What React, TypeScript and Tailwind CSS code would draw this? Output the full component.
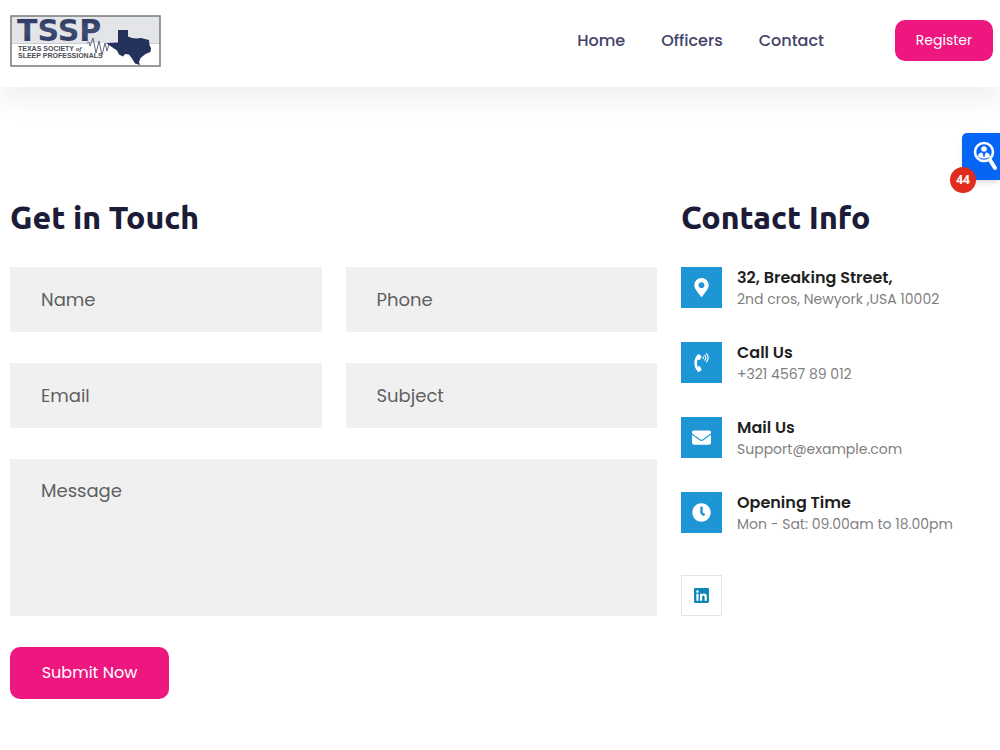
import type { ReactNode } from "react";
import { FaClock, FaEnvelope, FaLinkedin, FaMapMarkerAlt, FaPhoneVolume } from "react-icons/fa";

const NAV_LINKS = [
  { label: "Home", href: "#home" },
  { label: "Officers", href: "#officers" },
  { label: "Contact", href: "#contact" },
];

const CONTACT_ITEMS = [
  {
    title: "32, Breaking Street,",
    detail: "2nd cros, Newyork ,USA 10002",
    icon: <FaMapMarkerAlt className="h-[19px] w-[19px]" />,
  },
  { title: "Call Us", detail: "+321 4567 89 012", icon: <FaPhoneVolume className="h-[19px] w-[19px]" /> },
  { title: "Mail Us", detail: "Support@example.com", icon: <FaEnvelope className="h-[19px] w-[19px]" /> },
  { title: "Opening Time", detail: "Mon - Sat: 09.00am to 18.00pm", icon: <FaClock className="h-[19px] w-[19px]" /> },
];

function Logo() {
  return (
    <svg
      viewBox="0 0 151 52"
      className="h-[52px] w-[151px] overflow-visible"
      role="img"
      aria-label="Texas Society of Sleep Professionals"
    >
      <defs>
        <linearGradient id="logo-ink" x1="0" y1="0" x2="0" y2="1">
          <stop offset="0" stopColor="#26335c" />
          <stop offset="0.5" stopColor="#3f4c74" />
          <stop offset="1" stopColor="#26335c" />
        </linearGradient>
      </defs>
      <rect x="1" y="1" width="149" height="50" fill="#fff" />
      <rect x="1" y="1" width="149" height="27" fill="#e3e5e8" />
      <path d="M1 28.500H78M106 28.500H150" stroke="#bfc1c6" strokeWidth="0.8" />
      <rect x="1" y="1" width="149" height="50" fill="none" stroke="#77797e" strokeWidth="1.500" />
      <text x="7" y="26" fontFamily="DejaVu Sans, sans-serif" fontWeight="700" fontSize="30" fill="url(#logo-ink)">
        TSSP
      </text>
      <g fontFamily="Liberation Sans, sans-serif" fontWeight="700" fontSize="7" fill="#4a4d55">
        <text x="8" y="36">
          TEXAS SOCIETY{" "}
          <tspan fontFamily="Liberation Serif, serif" fontStyle="italic">
            of
          </tspan>
        </text>
        <text x="8" y="43">SLEEP PROFESSIONALS</text>
      </g>
      <path
        d="M77 28l2-1 1 4 3-8 3 15 3-12 3 14 3-12 2 8 2-7"
        fill="none"
        stroke="#5f6680"
        strokeWidth="1"
        strokeLinejoin="round"
      />
      <path
        d="M96 28l12-.5V15h10v6.500l4 1.500 4 .5 5-.5 8 2 .5 5 1.500 3-.5 4-5 2-5 4-1.500 4 1 3-5-1.500-3-5-3-4-4-.5-2 2.500-4-2-2-4z"
        fill="#24315a"
      />
    </svg>
  );
}

function Header() {
  return (
    <header className="flex h-[87px] items-start justify-between bg-white pt-[15px] pr-[7px] pl-2.5 shadow-[0_10px_30px_rgba(25,25,25,0.08)]">
      <a href="#home">
        <Logo />
      </a>
      <div className="flex items-center gap-[71px] pt-[5px]">
        <nav className="flex gap-9">
          {NAV_LINKS.map((link) => (
            <a key={link.label} href={link.href} className="text-base font-medium text-[#42426a]">
              {link.label}
            </a>
          ))}
        </nav>
        <a
          href="#register"
          className="flex h-[41px] w-[98px] items-center justify-center rounded-[10px] bg-[#ed177f] pb-0.5 text-sm text-white"
        >
          Register
        </a>
      </div>
    </header>
  );
}

function Field({ id, label, type = "text" }: { id: string; label: string; type?: string }) {
  return (
    <input
      id={id}
      type={type}
      placeholder={label}
      aria-label={label}
      className="h-[65px] w-full bg-[#f0f0f0] px-[31px] text-lg placeholder:text-[#5f5f5f]"
    />
  );
}

function SectionTitle({ children }: { children: ReactNode }) {
  return (
    <h2 className="mb-[30px] font-['Ubuntu','Noto_Sans',sans-serif] text-[32px] leading-10 font-extrabold text-[#1c1c38]">
      {children}
    </h2>
  );
}

function ContactForm() {
  return (
    <section>
      <SectionTitle>Get in Touch</SectionTitle>
      <form onSubmit={(e) => e.preventDefault()}>
        <div className="grid grid-cols-2 gap-x-6 gap-y-[31px]">
          <Field id="name" label="Name" />
          <Field id="phone" label="Phone" type="tel" />
          <Field id="email" label="Email" type="email" />
          <Field id="subject" label="Subject" />
          <textarea
            id="message"
            placeholder="Message"
            aria-label="Message"
            className="col-span-2 h-[157px] w-full resize-none bg-[#f0f0f0] px-[31px] py-[18px] text-lg placeholder:text-[#5f5f5f]"
          />
        </div>
        <button type="submit" className="mt-[31px] h-[52px] w-[159px] rounded-[10px] bg-[#ed177f] text-base text-white">
          Submit Now
        </button>
      </form>
    </section>
  );
}

function ContactInfo() {
  return (
    <section>
      <SectionTitle>Contact Info</SectionTitle>
      <ul className="flex flex-col gap-[31px]">
        {CONTACT_ITEMS.map((item) => (
          <li key={item.title} className="flex h-11 gap-[15px]">
            <span className="flex h-[41px] w-[41px] shrink-0 items-center justify-center bg-[#1e95d4] text-white">
              {item.icon}
            </span>
            <div>
              <h3 className="text-base leading-[21px] font-semibold text-[#1f1f1f]">{item.title}</h3>
              <p className="text-sm leading-[22px] text-[#7f7f7f]">{item.detail}</p>
            </div>
          </li>
        ))}
      </ul>
      <a
        href="#linkedin"
        aria-label="LinkedIn"
        className="mt-[39px] flex h-[41px] w-[41px] items-center justify-center border border-[#e4e4e4] text-[#0a85b5]"
      >
        <FaLinkedin className="h-[17px] w-[17px]" />
      </a>
    </section>
  );
}

function VisitorWidget() {
  return (
    <button
      type="button"
      aria-label="44 visitors"
      className="absolute top-[133px] right-0 h-[47px] w-[38px] rounded-l-[5px] bg-[#0566f5] shadow-md"
    >
      <svg viewBox="0 0 38 47" className="h-[47px] w-[38px]" fill="none">
        <circle cx="22" cy="19" r="9" stroke="#fff" strokeWidth="2.600" />
        <path d="M28 27l5 8" stroke="#fff" strokeWidth="4" strokeLinecap="round" />
        <circle cx="22" cy="16" r="2.800" fill="#fff" />
        <path d="M16 23.500c0-3 2-4 4-4l2 3 2-3c2 0 4 1 4 4-2 1.500-4 2-6 2s-4-.5-6-2z" fill="#fff" />
        <path d="M22 20l1 1-.5 3h-1l-.5-3z" fill="#0566f5" />
      </svg>
      <span className="absolute top-[34px] -left-3 flex h-[26px] w-[26px] items-center justify-center rounded-full bg-[#e02b1d] font-['Open_Sans',sans-serif] text-xs font-bold text-white">
        44
      </span>
    </button>
  );
}

export default function App() {
  return (
    <div className="relative min-h-screen bg-white font-['Poppins','Inter',sans-serif]">
      <Header />
      <main className="grid grid-cols-[647fr_309fr] gap-6 px-2.5 pt-[110px] pb-12">
        <ContactForm />
        <ContactInfo />
      </main>
      <VisitorWidget />
    </div>
  );
}
